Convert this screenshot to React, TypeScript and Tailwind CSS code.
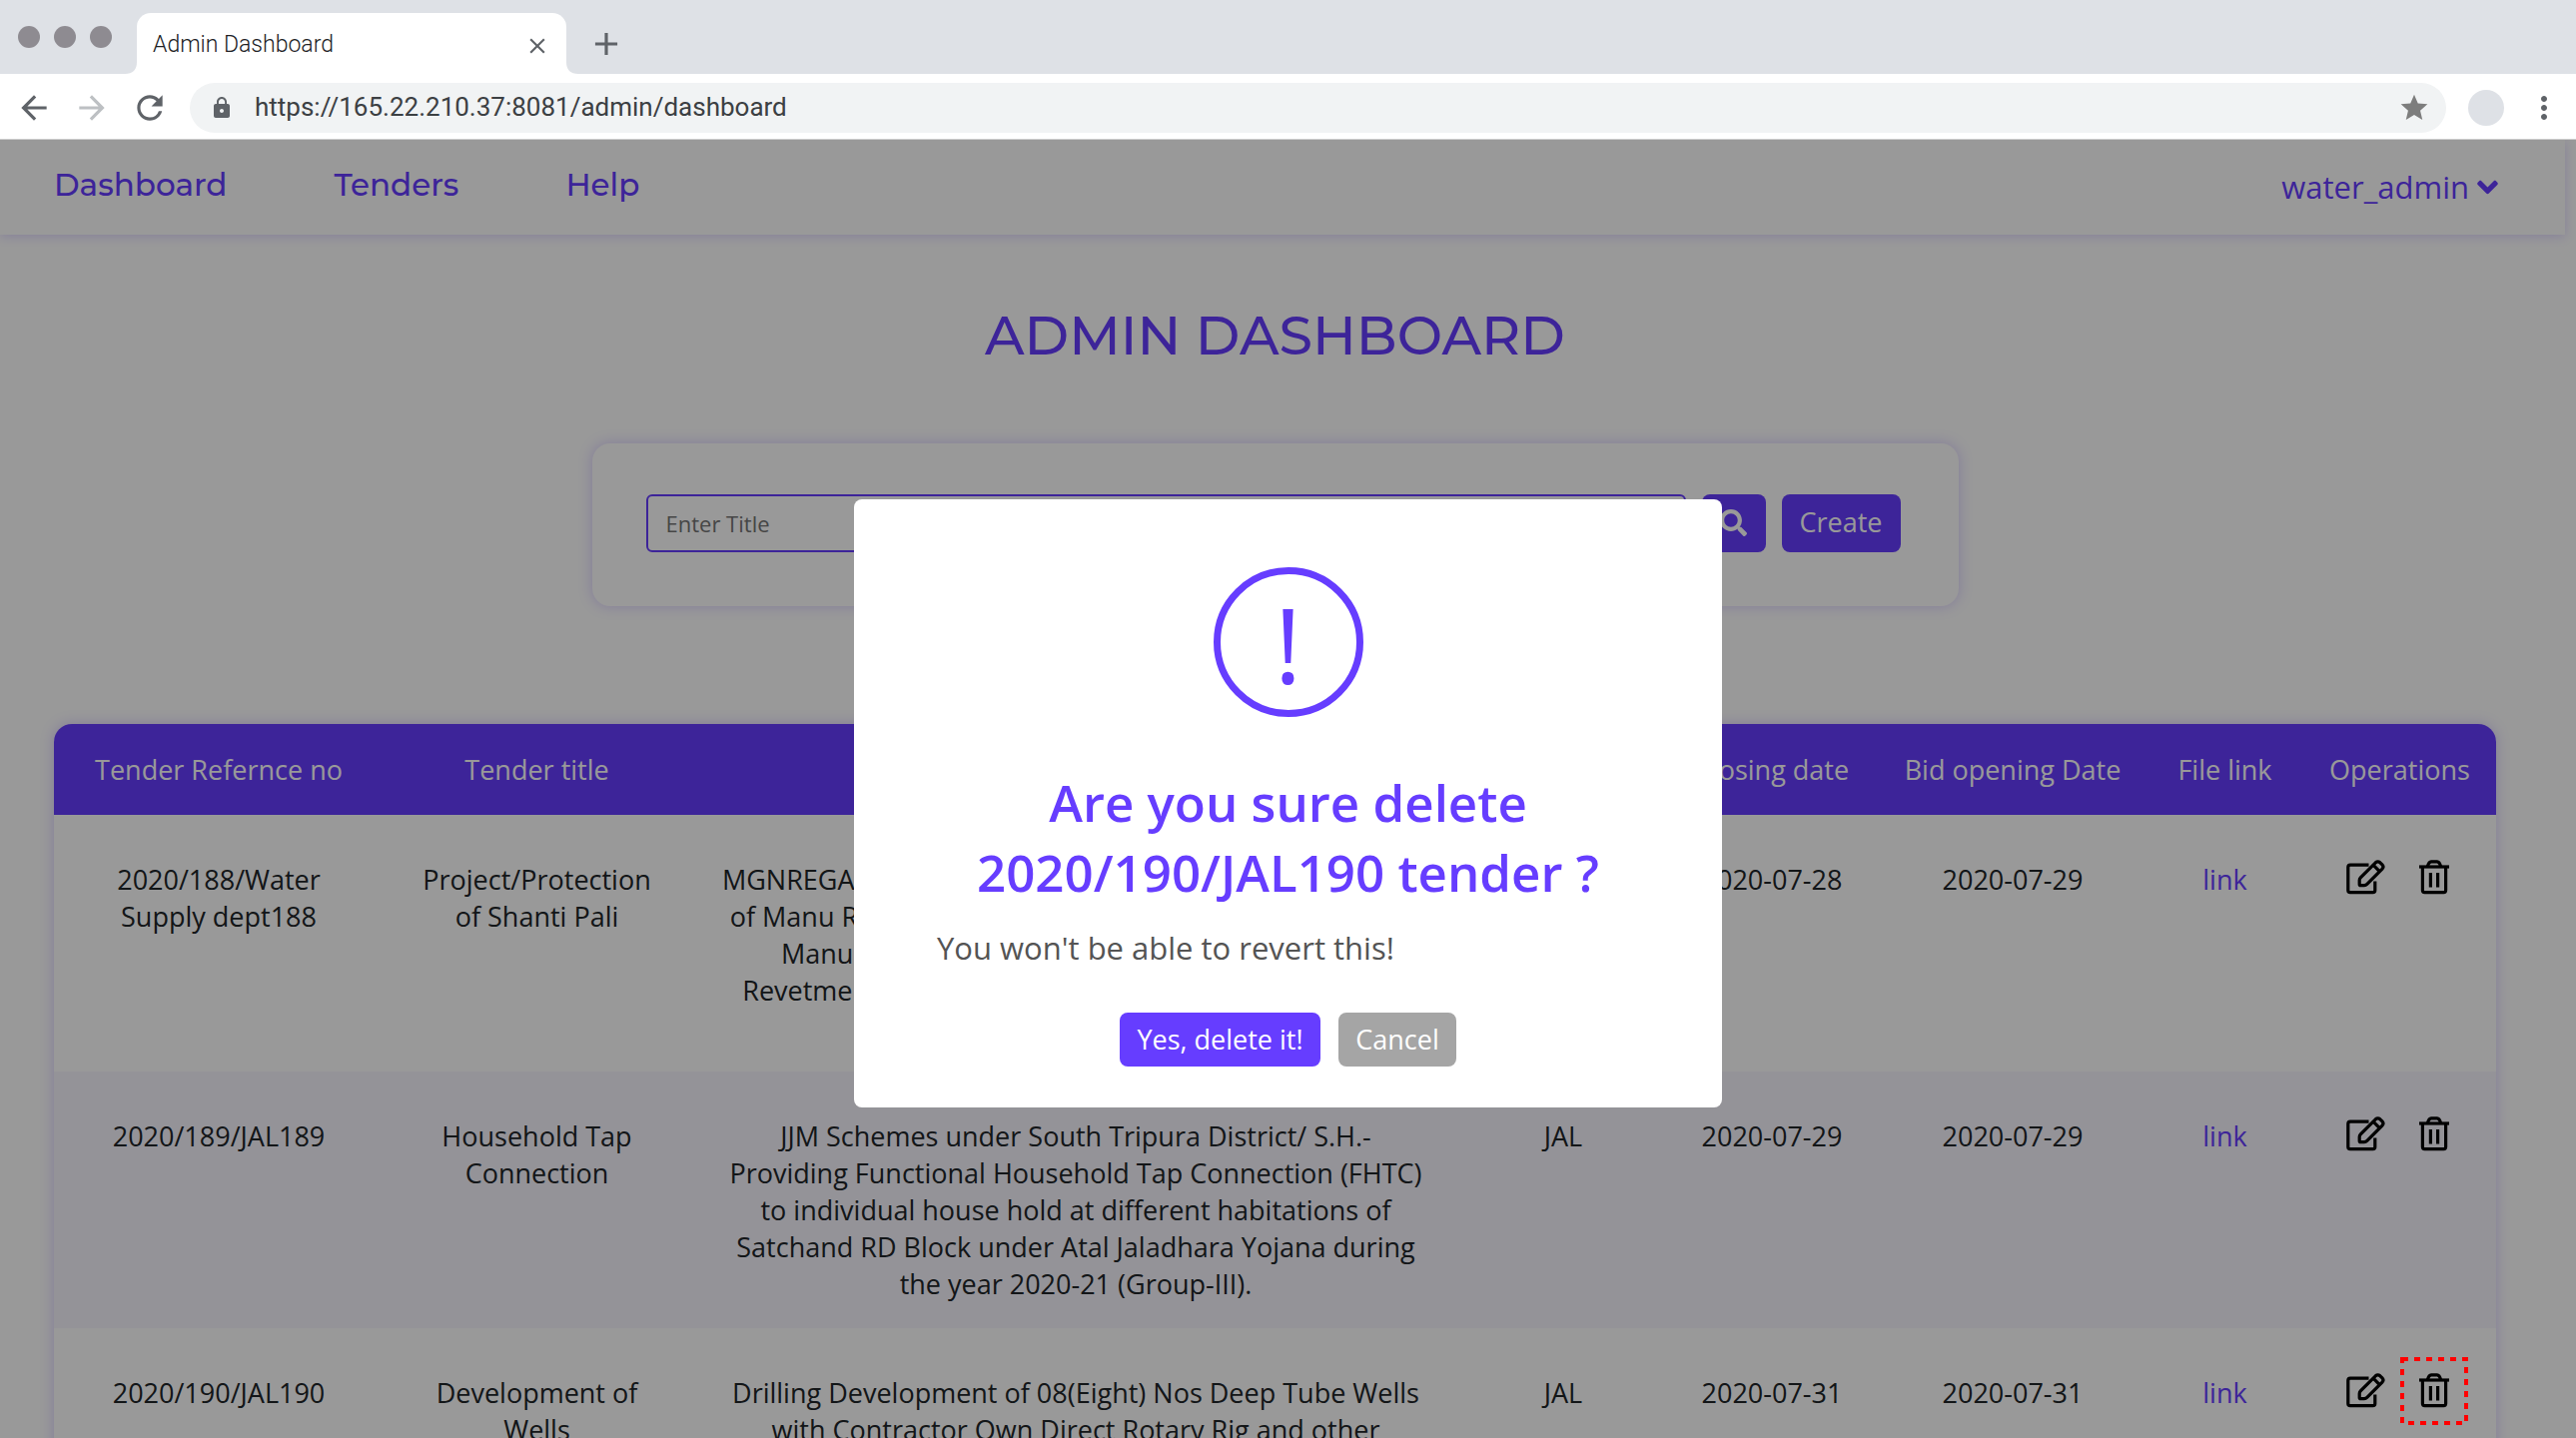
import React from "react";
import {
  MdAdd,
  MdArrowBack,
  MdArrowForward,
  MdClose,
  MdLock,
  MdMoreVert,
  MdRefresh,
  MdStar,
} from "react-icons/md";
import { FaAngleDown, FaSearch } from "react-icons/fa";

type Tender = {
  ref: string;
  title: string;
  description: string[];
  dept: string;
  closing: string;
  opening: string;
  highlighted?: boolean;
};

const tenders: Tender[] = [
  {
    ref: "2020/188/Water Supply dept188",
    title: "Project/Protection of Shanti Pali",
    description: [
      "MGNREGA Schemes for Protection of the left river banks",
      "of Manu River at Shanti Pali under Kumarghat RD Block",
      "Manu River Division, Unakoti District, by way of",
      "Revetment work with boulders during the whole year",
      "2020-21 (Group-I).",
    ],
    dept: "Water",
    closing: "2020-07-28",
    opening: "2020-07-29",
  },
  {
    ref: "2020/189/JAL189",
    title: "Household Tap Connection",
    description: [
      "JJM Schemes under South Tripura District/ S.H.-",
      "Providing Functional Household Tap Connection (FHTC) to individual house hold at different habitations of Satchand RD Block under Atal Jaladhara Yojana during the year 2020-21 (Group-III).",
    ],
    dept: "JAL",
    closing: "2020-07-29",
    opening: "2020-07-29",
  },
  {
    ref: "2020/190/JAL190",
    title: "Development of Wells",
    description: [
      "Drilling Development of 08(Eight) Nos Deep Tube Wells with Contractor Own Direct Rotary Rig and other",
    ],
    dept: "JAL",
    closing: "2020-07-31",
    opening: "2020-07-31",
    highlighted: true,
  },
];

function EditIcon() {
  return (
    <svg width="39" height="35" viewBox="0 0 39 35" fill="none" stroke="currentColor" strokeWidth="3.2" aria-hidden="true">
      <path d="M22.5 5.2H4Q1.8 5.2 1.8 7.4V30.5Q1.8 32.7 4 32.7H26.6Q28.8 32.7 28.8 30.5V21.5" />
      <path d="M13.2 24.4V20.6Q13.2 19 14.3 17.8L29.3 2.8Q31.6 0.8 33.9 2.8L36 4.9Q38 7.1 36 9.2L20.8 24.4Q19.6 25.6 18 25.6H14.4Q13.2 25.6 13.2 24.4Z" />
      <path d="M27.2 5.4L33.4 11.6" />
    </svg>
  );
}

function TrashIcon() {
  return (
    <svg width="30" height="35" viewBox="0 0 30 35" fill="none" stroke="currentColor" strokeWidth="3.2" aria-hidden="true">
      <path d="M0 7H30" />
      <path d="M8.4 6.6Q9.6 1.8 12 1.8H18Q20.4 1.8 21.6 6.6" />
      <path d="M3.4 7V30.6Q3.4 32.7 5.5 32.7H24.5Q26.6 32.7 26.6 30.6V7" />
      <path d="M11.4 13V27.6M18.6 13V27.6" />
    </svg>
  );
}

function TargetMarker() {
  return (
    <svg className="pointer-events-none absolute top-1/2 left-1/2 z-20 -translate-1/2" width="68" height="68" viewBox="0 0 68 68" aria-hidden="true">
      <rect x="2" y="2" width="64" height="64" fill="none" stroke="#ff0000" strokeWidth="4" strokeDasharray="6 6" />
    </svg>
  );
}

function BrowserChrome() {
  return (
    <header className="shrink-0 border-b border-[#cccccc] bg-white text-[#5f6368]">
      <div className="flex h-[74px] items-end bg-[#dee1e6]">
        <div className="flex h-[74px] w-[137px] shrink-0 items-center gap-[14px] pl-[18px]">
          <span className="size-[22px] rounded-full bg-[#8e8b91]" />
          <span className="size-[22px] rounded-full bg-[#8e8b91]" />
          <span className="size-[22px] rounded-full bg-[#8e8b91]" />
        </div>
        <div className="relative flex h-[61px] w-[430px] items-center justify-between rounded-t-[14px] bg-white px-4 pt-1">
          <svg className="absolute bottom-0 -left-[12px]" width="12" height="12" viewBox="0 0 12 12" aria-hidden="true">
            <path d="M12 0V12H0Q12 12 12 0Z" fill="#fff" />
          </svg>
          <svg className="absolute -right-[12px] bottom-0" width="12" height="12" viewBox="0 0 12 12" aria-hidden="true">
            <path d="M0 0V12H12Q0 12 0 0Z" fill="#fff" />
          </svg>
          <span className="font-['Roboto',sans-serif] text-[23px] font-light text-[#202124]">Admin Dashboard</span>
          <button type="button" aria-label="Close tab">
            <MdClose size={26} />
          </button>
        </div>
        <button type="button" aria-label="New tab" className="ml-[21px] flex h-[61px] items-center">
          <MdAdd size={38} />
        </button>
      </div>
      <div className="flex h-[65px] items-center pt-0.5 pr-[14px] pl-[15px]">
        <div className="flex items-center gap-5">
          <button type="button" aria-label="Back">
            <MdArrowBack size={38} />
          </button>
          <button type="button" aria-label="Forward" className="text-[#bdc0c3]">
            <MdArrowForward size={38} />
          </button>
          <button type="button" aria-label="Reload">
            <MdRefresh size={38} />
          </button>
        </div>
        <div className="ml-[21px] flex h-[50px] min-w-0 flex-1 items-center rounded-full bg-[#f1f3f4] pr-4 pl-5">
          <MdLock size={24} className="shrink-0" />
          <input
            aria-label="Address"
            defaultValue="https://165.22.210.37:8081/admin/dashboard"
            className="ml-[21px] min-w-0 flex-1 bg-transparent font-['Roboto',sans-serif] text-[26px] text-[#3c4043] outline-none"
          />
          <button type="button" aria-label="Bookmark" className="text-[#7d7d7d]">
            <MdStar size={32} />
          </button>
        </div>
        <span className="ml-[22px] size-9 shrink-0 rounded-full bg-[#dee1e6]" />
        <button type="button" aria-label="Menu" className="ml-[22px]">
          <MdMoreVert size={36} />
        </button>
      </div>
    </header>
  );
}

function NavBar() {
  return (
    <nav className="mr-[11px] flex h-[95px] items-center justify-between pr-[67px] pl-[54px] text-[#663dff] shadow-[0_2px_10px_rgba(102,61,255,0.2)]">
      <div className="flex items-center gap-[107px] pb-1 font-['Montserrat',sans-serif] text-[31px] font-medium">
        <a href="#dashboard">Dashboard</a>
        <a href="#tenders">Tenders</a>
        <a href="#help">Help</a>
      </div>
      <button type="button" className="flex items-center gap-2 text-[31px]">
        water_admin
        <FaAngleDown className="h-[33px] w-[21px]" />
      </button>
    </nav>
  );
}

function SearchCard() {
  return (
    <form
      className="mx-auto mt-[70px] flex h-[163px] w-[1368px] max-w-full items-center rounded-[18px] pr-[58px] pb-1 pl-[54px] shadow-[0_0_14px_rgba(102,61,255,0.25)]"
      onSubmit={(e) => e.preventDefault()}
    >
      <input
        aria-label="Tender title"
        placeholder="Enter Title"
        className="h-[58px] min-w-0 flex-1 rounded-md border-2 border-[#663dff] bg-white px-[18px] text-[22px] placeholder:text-[#757575]"
      />
      <button type="submit" aria-label="Search" className="ml-4 flex h-[58px] w-16 items-center justify-center rounded-lg bg-[#663dff] text-white">
        <FaSearch size={27} />
      </button>
      <button type="button" className="ml-4 h-[58px] w-[119px] rounded-lg bg-[#663dff] text-[27px] text-white">
        Create
      </button>
    </form>
  );
}

function TenderTable() {
  return (
    <div className="mt-[118px] overflow-hidden rounded-[18px] shadow-[0_0_14px_rgba(102,61,255,0.25)]">
      <table className="w-full table-fixed text-center text-[27px] leading-[37px] text-[#212529]">
        <colgroup>
          <col className="w-[330px]" />
          <col className="w-[307px]" />
          <col className="w-[772px]" />
          <col className="w-[204px]" />
          <col className="w-[214px]" />
          <col className="w-[268px]" />
          <col className="w-[157px]" />
          <col className="w-[193px]" />
        </colgroup>
        <thead className="bg-[#663dff] whitespace-nowrap text-white">
          <tr className="h-[91px]">
            <th className="font-normal">Tender Refernce no</th>
            <th className="font-normal">Tender title</th>
            <th className="font-normal">Description</th>
            <th className="font-normal">Department</th>
            <th className="font-normal">Closing date</th>
            <th className="font-normal">Bid opening Date</th>
            <th className="font-normal">File link</th>
            <th className="font-normal">Operations</th>
          </tr>
        </thead>
        <tbody>
          {tenders.map((t) => (
            <tr key={t.ref} className="h-[257px] align-top even:bg-[#f7f5fe]">
              <td className="px-[30px] pt-[46px] pb-[25px]">{t.ref}</td>
              <td className="px-[30px] pt-[46px] pb-[25px]">{t.title}</td>
              <td className="px-[30px] pt-[46px] pb-[25px]">
                {t.description.map((line) => (
                  <p key={line}>{line}</p>
                ))}
              </td>
              <td className="pt-[46px] pb-[25px]">{t.dept}</td>
              <td className="pt-[46px] pb-[25px]">{t.closing}</td>
              <td className="pt-[46px] pb-[25px]">{t.opening}</td>
              <td className="pt-[46px] pb-[25px]">
                <a href="#file" className="text-[#663dff]">
                  link
                </a>
              </td>
              <td className="pt-[45px] pb-[25px]">
                <div className="flex justify-center gap-[34px] pr-1 text-black">
                  <button type="button" aria-label={`Edit ${t.ref}`}>
                    <EditIcon />
                  </button>
                  <button type="button" aria-label={`Delete ${t.ref}`} className="relative">
                    <TrashIcon />
                    {t.highlighted && <TargetMarker />}
                  </button>
                </div>
              </td>
            </tr>
          ))}
        </tbody>
      </table>
    </div>
  );
}

function DeleteDialog() {
  return (
    <div className="absolute inset-0 z-10 flex items-center justify-center bg-black/40 pt-[29px]">
      <div
        role="alertdialog"
        aria-labelledby="confirm-title"
        aria-describedby="confirm-text"
        className="flex w-[869px] max-w-full flex-col items-center rounded-lg bg-white px-[83px] pt-[68px] pb-[41px]"
      >
        <div className="flex size-[150px] items-center justify-center rounded-full border-[7px] border-[#663dff] pt-1 text-[104px] leading-none text-[#663dff]">
          !
        </div>
        <h2 id="confirm-title" className="mt-[50px] text-center text-[51px] leading-[70px] font-semibold text-[#663dff]">
          Are you sure delete 2020/190/JAL190 tender ?
        </h2>
        <p id="confirm-text" className="mt-[19px] self-start text-[31px] leading-[44px] text-[#545454]">
          You won't be able to revert this!
        </p>
        <div className="mt-[43px] flex gap-[18px] text-[27px] text-white">
          <button type="button" className="h-[54px] w-[201px] rounded-lg bg-[#663dff]">
            Yes, delete it!
          </button>
          <button type="button" className="h-[54px] w-[118px] rounded-lg bg-[#a5a5a5]">
            Cancel
          </button>
        </div>
      </div>
    </div>
  );
}

export default function App() {
  return (
    <div className="flex h-screen flex-col overflow-hidden bg-white font-['Open_Sans',sans-serif]">
      <BrowserChrome />
      <main className="relative min-h-0 flex-1 overflow-hidden">
        <NavBar />
        <div className="pr-20 pl-[54px]">
          <h1 className="mt-[63px] text-center font-['Montserrat',sans-serif] text-[54px] leading-[76px] font-medium text-[#663dff]">
            ADMIN DASHBOARD
          </h1>
          <SearchCard />
          <TenderTable />
        </div>
        <DeleteDialog />
      </main>
    </div>
  );
}
